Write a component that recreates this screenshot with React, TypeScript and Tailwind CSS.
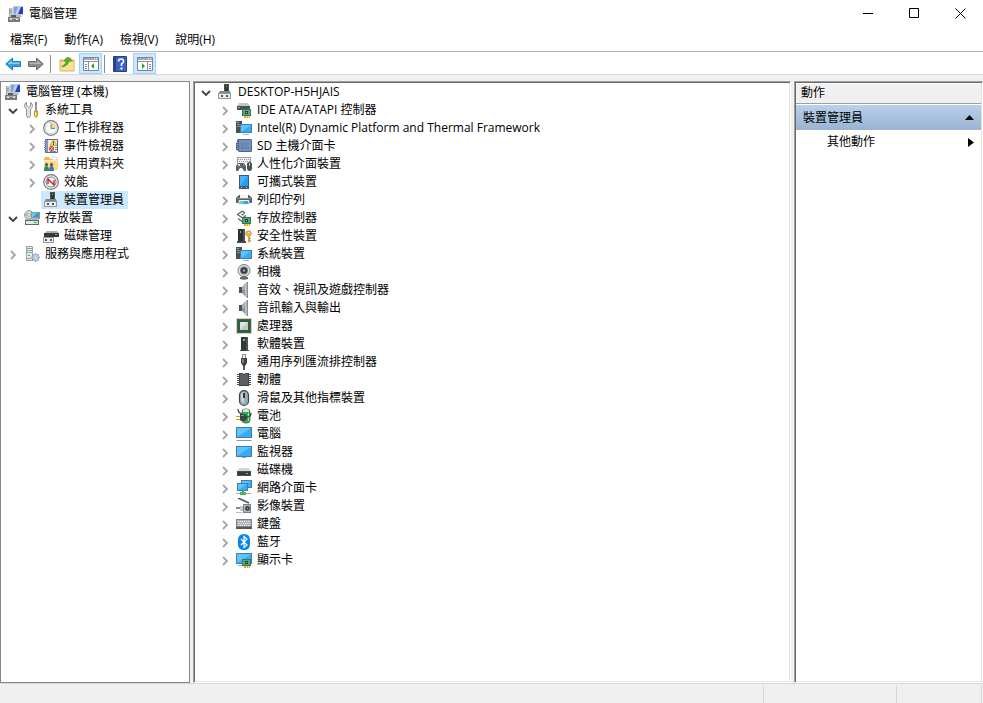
import React, { useState } from 'react';

type IconProps = { children: React.ReactNode };

const Icon: React.FC<IconProps> = ({ children }) => (
  <svg className="block h-4 w-4 shrink-0" viewBox="0 0 16 16" fill="none" aria-hidden="true">
    {children}
  </svg>
);

/* Small drawings reused by several icons */
const Board = () => (
  <>
    <path d="M6 7h9v7H6z" fill="#2f7d55" />
    <path d="M7 8h7v5H7z" fill="#56a37e" />
    <path d="M9 9h3v3H9z" fill="#1a4a33" />
    <path d="M10 10h1v1h-1z" fill="#8fcfae" />
    <path d="M8 14h6v2H8z" fill="#f0a818" />
    <path d="M10 14h1v2h-1zM12 14h1v2h-1z" fill="#fbe08a" />
  </>
);

const Screen = ({ x, y, w, h }: { x: number; y: number; w: number; h: number }) => (
  <>
    <rect x={x} y={y} width={w} height={h} fill="#3f7ea8" />
    <rect x={x + 1} y={y + 1} width={w - 2} height={h - 2} fill="#36acf5" />
    <path d={`M${x + 1} ${y + h - 1}V${y + 1}h${w - 2}z`} fill="#62c3fa" />
  </>
);

const icons: Record<string, React.ReactNode> = {
  management: (
    <Icon>
      <path d="M1 2h4v9H1z" fill="#c9cdd0" />
      <path d="M1 2h1v9H1z" fill="#9da3a8" />
      <path d="M2 4h2v1H2z" fill="#4fc34f" />
      <path d="M2 6h2v1H2z" fill="#8d9499" />
      <path d="M5 0h10v9H5z" fill="#c3cad3" />
      <path d="M6 1h9v7H6z" fill="#2440bd" />
      <path d="M6 1h5L7 8H6z" fill="#7f9fe8" />
      <path d="M10 1h3l-3 7H7z" fill="#b9cdf7" />
      <path d="M8 9h5v1H8zM7 10h7v1H7z" fill="#b6bbc0" />
      <path d="M0 11h12v5H0z" fill="#737a80" />
      <path d="M3 9h5v2H3z" fill="#565d62" />
      <path d="M1 12h10v1H1z" fill="#b4babf" />
      <path d="M2 13h2v1H2zM8 13h2v1H8z" fill="#f4f4f4" />
    </Icon>
  ),
  device: (
    <Icon>
      <path d="M7 0h5v8H7z" fill="#4b5054" />
      <path d="M8 1h3v6H8z" fill="#303437" />
      <path d="M9 2h1v1H9z" fill="#54e052" />
      <path d="M3 7h10l1 3H1z" fill="#7f8487" />
      <path d="M1 9h13v6H1z" fill="#94999c" />
      <path d="M2 10h11v4H2z" fill="#e9ebec" />
      <path d="M4 11h2v2H4zM9 11h2v2H9z" fill="#54595c" />
    </Icon>
  ),
  tools: (
    <Icon>
      <path d="M2.500.500v3l2 1.500 2-1.500v-3q2 1 2 3T6.500 7v6.500q0 2-2 2t-2-2V7Q.5 6 .5 3.500t2-3z" fill="#dfe1e2" stroke="#84898d" strokeWidth=".9" />
      <path d="M12 1v8" stroke="#72777a" strokeWidth="1.500" />
      <path d="M11 0h2v3h-2z" fill="#85898c" />
      <path d="M10.500 9h3v5l-1.500 1.500-1.500-1.500z" fill="#f0bd23" stroke="#ac7910" strokeWidth=".7" />
      <path d="M11 10h1v4h-1z" fill="#ffe587" />
    </Icon>
  ),
  clock: (
    <Icon>
      <circle cx="8" cy="8" r="7.300" fill="#f8f8f6" stroke="#777b7e" strokeWidth="1.200" />
      <circle cx="8" cy="8" r="5.800" stroke="#c8cbcc" strokeWidth=".8" />
      <path d="M8 3a5 5 0 0 1 5 5H8z" fill="#f6d08c" />
      <path d="M8 3.500V8.500h4" stroke="#6b87a2" strokeWidth="1" />
    </Icon>
  ),
  events: (
    <Icon>
      <path d="M2.500 1.500h12v13h-12z" fill="#e5ebf4" stroke="#5b6c90" />
      <path d="M3 2h2v12H3z" fill="#7e96c0" />
      <path d="M1 3.500h2M1 5.500h2M1 7.500h2M1 9.500h2M1 11.500h2" stroke="#8d98a9" />
      <path d="M10.500 1.500l3.500 6H7z" fill="#ffdb19" stroke="#c99a12" strokeWidth=".6" />
      <path d="M10 3.500h1v2h-1zM10 6h1v1h-1z" fill="#3a3420" />
      <circle cx="8.500" cy="10.500" r="2.500" fill="#d4463b" />
      <path d="M7.500 9.500l2 2m0-2l-2 2" stroke="#fff" strokeWidth=".8" />
      <path d="M12 9.500h2M12 11.500h2M7 13.500h6" stroke="#7b90b0" />
    </Icon>
  ),
  shared: (
    <Icon>
      <path d="M1 3l1-2h4l1 2h8v11H1z" fill="#e5bb5a" />
      <path d="M9 1h5v3H9z" fill="#fff" stroke="#b7b7b7" strokeWidth=".5" />
      <path d="M1 4h14v10H1z" fill="#fbdc8c" />
      <path d="M1 4h14v1H1z" fill="#ffeeb9" />
      <circle cx="3.500" cy="8.500" r="1.500" fill="#5d4732" />
      <circle cx="8.500" cy="8.500" r="1.500" fill="#5d4732" />
      <path d="M1 15q0-5 2.500-5T6 15z" fill="#2d8a62" />
      <path d="M6 15q0-5 2.500-5t2.500 5z" fill="#3b77b4" />
    </Icon>
  ),
  performance: (
    <Icon>
      <circle cx="8" cy="8" r="7.300" fill="#f0f1f1" stroke="#777b7e" strokeWidth="1.200" />
      <circle cx="8" cy="8" r="5" fill="#fff" stroke="#797e81" strokeWidth="1" />
      <path d="M5 10V5l6 6V6" stroke="#c5262c" strokeWidth="1.400" />
    </Icon>
  ),
  storage: (
    <Icon>
      <circle cx="5" cy="5" r="4.500" fill="#d2d6d8" stroke="#9aa0a4" />
      <path d="M2 3l3 2-4 1z" fill="#8fbf9a" />
      <circle cx="5" cy="5" r="1.400" fill="#fff" stroke="#858b90" strokeWidth=".6" />
      <path d="M7 2h9v7H7z" fill="#8d979e" />
      <path d="M8 3h7v4H8z" fill="#26a0d6" />
      <path d="M8 3h5L9 7H8z" fill="#73c9ee" />
      <path d="M2 8h12l1 3H1z" fill="#adb3b7" />
      <path d="M1 10h14v5H1z" fill="#60676c" />
      <path d="M2 11h12v3H2z" fill="#e5e7e8" />
      <path d="M10 12h3v1h-3z" fill="#2cc421" />
    </Icon>
  ),
  disk: (
    <Icon>
      <path d="M4 3h10l2 3H1z" fill="#a9adb0" />
      <path d="M1 5h15v4H1z" fill="#35393b" />
      <path d="M12 6h2v1h-2z" fill="#51df3c" />
      <path d="M0 9h11v6H0z" fill="#94999c" />
      <path d="M1 10h9v4H1z" fill="#f0f0f0" />
      <path d="M2 11h2v2H2zM7 11h2v2H7z" fill="#54595c" />
    </Icon>
  ),
  services: (
    <Icon>
      <path d="M2 0h6l1 1v14H2z" fill="#9aa3a9" />
      <path d="M3 1h5v13H3z" fill="#e8ebed" />
      <path d="M3 2.500h5M3 4.500h5M3 6.500h5M3 12.500h4" stroke="#8fa0a8" />
      <path d="M4 9h2v1H4z" fill="#43b645" />
      <path d="M11.500 7v9M7 11.500h9M8.300 8.300l6.400 6.400M14.700 8.300l-6.400 6.400" stroke="#7da3c4" strokeWidth="1.300" />
      <circle cx="11.500" cy="11.500" r="3" fill="#c7dced" stroke="#7da3c4" strokeWidth=".8" />
      <circle cx="11.500" cy="11.500" r="1.200" fill="#fff" stroke="#6592b7" strokeWidth=".5" />
    </Icon>
  ),
  ide: (
    <Icon>
      <path d="M3 1h9l2 3H1z" fill="#c3c7ca" />
      <path d="M1 4h13v4H1z" fill="#4b5054" />
      <path d="M2 5h2v1H2z" fill="#54dd55" />
      <Board />
    </Icon>
  ),
  system: (
    <Icon>
      <path d="M0 1h6v12H0z" fill="#4b5256" />
      <path d="M1 4h4v1H1zM1 6h3v1H1z" fill="#858d91" />
      <path d="M1 2h2v1H1z" fill="#58dc51" />
      <Screen x={4} y={4} w={12} h={9} />
      <path d="M7 14h6v1H7z" fill="#a9bac6" />
    </Icon>
  ),
  sd: (
    <Icon>
      <path d="M2 1h13l1 1v11l-1 1H3l-2-2H0V5l1-1V2z" fill="#4d678b" />
      <path d="M3 2h12v11H3z" fill="#7590b4" />
      <path d="M5 4h8v7H5z" fill="#5f7da5" />
      <path d="M6 4h7v6H6z" fill="#6c89b0" />
      <path d="M1 4.500h1M1 6.500h1M1 8.500h1M1 10.500h1" stroke="#a8bad2" />
    </Icon>
  ),
  hid: (
    <Icon>
      <path d="M1 1h14v6H1z" fill="#9ba1a5" />
      <path d="M2 2h12v5H2z" fill="#eff1f2" />
      <path d="M2 3.500h12M3 5.500h11" stroke="#8b9195" strokeDasharray="1 1" />
      <path d="M2 7h6l2 3v5H8l-2-3H4l-2 3H0v-5z" fill="#5c6368" />
      <path d="M2 8h2v2H2z" fill="#dcdfe1" />
      <path d="M7 8h1v2H7z" fill="#51a5ea" />
      <path d="M4 10h1v1H4z" fill="#ea6a55" />
      <path d="M11 8q0-2 2.500-2T16 8v4q0 3-2.500 3T11 12z" fill="#4c5256" />
      <path d="M13 7h1v3h-1z" fill="#b9bec1" />
    </Icon>
  ),
  portable: (
    <Icon>
      <path d="M3 1h10v14H3z" fill="#44586a" />
      <path d="M4 2h8v10H4z" fill="#20a0f8" />
      <path d="M4 12V2h8z" fill="#46b3fb" />
      <path d="M5 13h1v1H5zM10 13h1v1h-1z" fill="#c5cfd6" />
    </Icon>
  ),
  printer: (
    <Icon>
      <path d="M3 3h10l3 3v5H0V6z" fill="#5a6368" />
      <path d="M1 6h14v1H1z" fill="#8f989d" />
      <path d="M4 3h8v3H4z" fill="#f6f6f6" />
      <path d="M3 8h10l1 5H2z" fill="#f3f5f6" />
      <path d="M4 9h8l1 3H3z" fill="#35a9cf" />
      <path d="M4 9h4l-1 3H3z" fill="#74cdb0" />
    </Icon>
  ),
  controller: (
    <Icon>
      <path d="M6.500 1l-5 3.500L6.500 8l3.500-2.500M9 3.500L6.500 1" stroke="#5c6367" strokeWidth="1.300" />
      <path d="M8 4.500H5.500M2 8.500l4 3" stroke="#5c6367" strokeWidth="1.300" />
      <Board />
    </Icon>
  ),
  security: (
    <Icon>
      <path d="M2 1h7v12H2z" fill="#2b3033" />
      <path d="M7 1h2v12H7z" fill="#4b5155" />
      <path d="M4 3h1v2H4z" fill="#4de04e" />
      <path d="M1 13h9v2H1z" fill="#44494c" />
      <circle cx="12.500" cy="5.500" r="2.800" fill="#e9b550" stroke="#c98f35" strokeWidth=".8" />
      <path d="M12 4h1v1h-1z" fill="#fff" />
      <path d="M12 8h2v6l-1 1-1-1z" fill="#dda23c" />
      <path d="M13 10h2v1h-2zM13 12h2v1h-2z" fill="#c98f35" />
    </Icon>
  ),
  camera: (
    <Icon>
      <circle cx="8" cy="6.500" r="6" fill="#e3e5e6" stroke="#74797c" strokeWidth="1" />
      <circle cx="8" cy="6.500" r="4" fill="#6d7376" />
      <circle cx="8" cy="6.500" r="2.800" fill="#2f3437" />
      <circle cx="8" cy="6.500" r="1.300" fill="#9da6ab" />
      <path d="M6 12h4v1H6zM4 13h8v2q-4 1.500-8 0z" fill="#64696c" />
    </Icon>
  ),
  speaker: (
    <Icon>
      <path d="M3 5h3v6H3z" fill="#4b5358" />
      <path d="M6 5l5-5v16l-5-5z" fill="#8d969b" />
      <path d="M6 5l5-5v8H6z" fill="#a8afb3" />
      <path d="M9 3l2-3h1v16h-1l-2-3z" fill="#b9c0c4" />
      <path d="M11 0h1v16h-1z" fill="#838b90" />
    </Icon>
  ),
  cpu: (
    <Icon>
      <rect x=".5" y=".5" width="15" height="15" stroke="#b9a758" strokeDasharray="1 1" />
      <path d="M1 1h14v14H1z" fill="#35694c" />
      <path d="M2 2h12v12H2z" fill="#2a5f42" />
      <path d="M4 4h8v8H4z" fill="#c3c7c8" />
      <path d="M4 12V4h8z" fill="#dfe2e2" />
    </Icon>
  ),
  software: (
    <Icon>
      <path d="M5 1h7v13H5z" fill="#303639" />
      <path d="M10 1h2v13h-2z" fill="#4d5357" />
      <path d="M7 3h2v2H7z" fill="#4de24d" />
      <path d="M4 14h9v1H4z" fill="#42484b" />
    </Icon>
  ),
  usb: (
    <Icon>
      <path d="M6 0h4v4H6z" fill="#8c9296" />
      <path d="M7 1h2v3H7z" fill="#eceeef" />
      <path d="M5 4h6v5l-2 3H7L5 9z" fill="#3c4245" />
      <path d="M6 5h2v4H6z" fill="#7b8286" />
      <path d="M7 12h2v4H7z" fill="#5a5f62" />
    </Icon>
  ),
  firmware: (
    <Icon>
      <path
        d="M1 2h3v1H1zM1 4h3v1H1zM1 6h3v1H1zM1 8h3v1H1zM1 10h3v1H1zM1 12h3v1H1zM12 2h3v1h-3zM12 4h3v1h-3zM12 6h3v1h-3zM12 8h3v1h-3zM12 10h3v1h-3zM12 12h3v1h-3z"
        fill="#4b5053"
      />
      <path d="M3 1h3l2 1 2-1h3v13H3z" fill="#3e4346" />
      <path d="M4 2h2l2 1 2-1h2v11H4z" fill="#5a6064" />
    </Icon>
  ),
  mouse: (
    <Icon>
      <rect x="3.500" y=".6" width="9" height="14.800" rx="4.500" fill="#9fabb4" stroke="#3f464b" strokeWidth="1.200" />
      <path d="M5 6q0-4 3-4v11q-3-1-3-4z" fill="#c9d2d8" />
      <path d="M7 3h2v5H7z" fill="#30393e" />
    </Icon>
  ),
  battery: (
    <Icon>
      <rect x="6" y="1" width="8" height="14" rx="3" fill="#25b344" stroke="#52605a" strokeWidth=".8" />
      <path d="M7 2q3-2 6 0v2H7z" fill="#d9e2dc" />
      <path d="M12 5h1v8h-1z" fill="#8df09c" />
      <path d="M2 1q0 4 4 5" stroke="#3b4144" strokeWidth="1.200" />
      <path d="M4 6h4q3 1 3 3.500T8 13H5L4 12z" fill="#3d4245" />
      <path d="M11 9q4 0 4-4" stroke="#3d4245" strokeWidth="1.300" />
      <path d="M0 8h4v1H0zM0 11h4v1H0z" fill="#d79d19" />
      <path d="M5 7h3v1H5z" fill="#858b8e" />
    </Icon>
  ),
  computer: (
    <Icon>
      <Screen x={0} y={1} w={16} h={11} />
      <path d="M1 14h14l1 1H0z" fill="#7f9bb0" />
    </Icon>
  ),
  monitor: (
    <Icon>
      <Screen x={0} y={2} w={16} h={11} />
      <path d="M6 13h4v1H6z" fill="#91a6b5" />
    </Icon>
  ),
  drive: (
    <Icon>
      <path d="M3 6h10l2 3H1z" fill="#d3d6d8" />
      <path d="M1 9h14v5H1z" fill="#4a4f52" />
      <path d="M2 10h12v3H2z" fill="#34393c" />
      <path d="M10 11h2v1h-2z" fill="#50df4d" />
    </Icon>
  ),
  network: (
    <Icon>
      <Screen x={5} y={0} w={11} h={8} />
      <Screen x={1} y={3} w={11} h={8} />
      <path d="M6 11h2v2H6zM4 12h6v3H4z" fill="#48b64f" />
      <path d="M0 13h4v1H0zM10 13h5v1h-5z" fill="#a4acaf" />
    </Icon>
  ),
  imaging: (
    <Icon>
      <path d="M2 0l11 5" stroke="#4d5356" strokeWidth="1.500" />
      <path d="M0 9h7v2H0z" fill="#84898d" />
      <path d="M4 8h4v5H4z" fill="#c4c8ca" />
      <path d="M7 6h8v9H7z" fill="#7b8084" />
      <path d="M8 7h6v7H8z" fill="#b4b9bc" />
      <circle cx="11.500" cy="10.500" r="2.400" fill="#33383b" />
      <circle cx="11.500" cy="10.500" r=".9" fill="#829ba9" />
      <path d="M0 14.500h6" stroke="#bcc0c3" />
    </Icon>
  ),
  keyboard: (
    <Icon>
      <path d="M0 3h16v10H0z" fill="#7c8489" />
      <path d="M1 4h14v6H1z" fill="#aab2b8" />
      <path d="M2 5.500h12M3 7.500h11M2 9.500h12" stroke="#f8f8f8" strokeDasharray="1 1" />
      <path d="M0 11h16v2H0z" fill="#51595e" />
    </Icon>
  ),
  bluetooth: (
    <Icon>
      <rect x="2" y="0" width="12" height="16" rx="5.500" fill="#0a84f5" />
      <path d="M5 5l6 6-3 2.500v-11L11 5l-6 6" stroke="#fff" strokeWidth="1.200" />
    </Icon>
  ),
  display: (
    <Icon>
      <Screen x={0} y={1} w={16} h={11} />
      <path d="M2 13h4v1H2z" fill="#9fb2bf" />
      <Board />
    </Icon>
  ),
};

type TreeNode = {
  label: string;
  icon: string;
  level: number;
  state?: 'open' | 'closed';
};

const consoleTree: TreeNode[] = [
  { label: '電腦管理 (本機)', icon: 'management', level: 0 },
  { label: '系統工具', icon: 'tools', level: 1, state: 'open' },
  { label: '工作排程器', icon: 'clock', level: 2, state: 'closed' },
  { label: '事件檢視器', icon: 'events', level: 2, state: 'closed' },
  { label: '共用資料夾', icon: 'shared', level: 2, state: 'closed' },
  { label: '效能', icon: 'performance', level: 2, state: 'closed' },
  { label: '裝置管理員', icon: 'device', level: 2 },
  { label: '存放裝置', icon: 'storage', level: 1, state: 'open' },
  { label: '磁碟管理', icon: 'disk', level: 2 },
  { label: '服務與應用程式', icon: 'services', level: 1, state: 'closed' },
];

const deviceTree: TreeNode[] = [
  { label: 'DESKTOP-H5HJAIS', icon: 'device', level: 1, state: 'open' },
  { label: 'IDE ATA/ATAPI 控制器', icon: 'ide', level: 2, state: 'closed' },
  { label: 'Intel(R) Dynamic Platform and Thermal Framework', icon: 'system', level: 2, state: 'closed' },
  { label: 'SD 主機介面卡', icon: 'sd', level: 2, state: 'closed' },
  { label: '人性化介面裝置', icon: 'hid', level: 2, state: 'closed' },
  { label: '可攜式裝置', icon: 'portable', level: 2, state: 'closed' },
  { label: '列印佇列', icon: 'printer', level: 2, state: 'closed' },
  { label: '存放控制器', icon: 'controller', level: 2, state: 'closed' },
  { label: '安全性裝置', icon: 'security', level: 2, state: 'closed' },
  { label: '系統裝置', icon: 'system', level: 2, state: 'closed' },
  { label: '相機', icon: 'camera', level: 2, state: 'closed' },
  { label: '音效、視訊及遊戲控制器', icon: 'speaker', level: 2, state: 'closed' },
  { label: '音訊輸入與輸出', icon: 'speaker', level: 2, state: 'closed' },
  { label: '處理器', icon: 'cpu', level: 2, state: 'closed' },
  { label: '軟體裝置', icon: 'software', level: 2, state: 'closed' },
  { label: '通用序列匯流排控制器', icon: 'usb', level: 2, state: 'closed' },
  { label: '韌體', icon: 'firmware', level: 2, state: 'closed' },
  { label: '滑鼠及其他指標裝置', icon: 'mouse', level: 2, state: 'closed' },
  { label: '電池', icon: 'battery', level: 2, state: 'closed' },
  { label: '電腦', icon: 'computer', level: 2, state: 'closed' },
  { label: '監視器', icon: 'monitor', level: 2, state: 'closed' },
  { label: '磁碟機', icon: 'drive', level: 2, state: 'closed' },
  { label: '網路介面卡', icon: 'network', level: 2, state: 'closed' },
  { label: '影像裝置', icon: 'imaging', level: 2, state: 'closed' },
  { label: '鍵盤', icon: 'keyboard', level: 2, state: 'closed' },
  { label: '藍牙', icon: 'bluetooth', level: 2, state: 'closed' },
  { label: '顯示卡', icon: 'display', level: 2, state: 'closed' },
];

const indents = ['pl-px', 'pl-px', 'pl-5'];

const Tree: React.FC<{ nodes: TreeNode[]; initial?: string }> = ({ nodes, initial }) => {
  const [selected, setSelected] = useState(initial);

  return (
    <ul>
      {nodes.map((node) => (
        <li key={node.label} className={`flex h-[18px] items-center ${indents[node.level]}`}>
          {node.level > 0 && (
            <span className="flex w-[19px] shrink-0 justify-center pt-px">
              {node.state && (
                <button type="button" aria-label={node.label} aria-expanded={node.state === 'open'}>
                  <svg className="block h-[10px] w-[10px]" viewBox="0 0 10 10" fill="none">
                    {node.state === 'open' ? (
                      <path d="M1 3l4 4 4-4" stroke="#404040" strokeWidth="1.800" />
                    ) : (
                      <path d="M3 1l4 4-4 4" stroke="#a6a6a6" strokeWidth="1.800" />
                    )}
                  </svg>
                </button>
              )}
            </span>
          )}
          <button
            type="button"
            onClick={() => setSelected(node.label)}
            className={`flex h-[18px] items-center gap-[5px] pl-[2px] pr-1 whitespace-nowrap ${
              selected === node.label ? 'bg-[#cce8ff]' : ''
            }`}
          >
            {icons[node.icon]}
            <span>{node.label}</span>
          </button>
        </li>
      ))}
    </ul>
  );
};

const PaneIcon = ({ side }: { side: 'left' | 'right' }) => (
  <svg className="block h-4 w-4" viewBox="0 0 16 16" fill="none">
    <path d="M.5 1.500h15v13H.5z" fill="#fff" stroke="#7c848c" />
    <path d="M1 2h14v2H1z" fill="#a3aab2" />
    <path d="M11 2h1v1h-1zM13 2h1v1h-1z" fill="#fff" />
    <path d="M1 5.500h14" stroke="#8b939c" />
    {side === 'left' ? (
      <>
        <path d="M5.500 6v8" stroke="#8b939c" />
        <path d="M2 8.500h2M2 10.500h2M2 12.500h2" stroke="#6c88b0" />
        <path d="M11 7v6l-3-3z" fill="#2da52d" />
      </>
    ) : (
      <>
        <path d="M10.500 6v8" stroke="#8b939c" />
        <path d="M12 8.500h2M12 10.500h2M12 12.500h2" stroke="#6c88b0" />
        <path d="M5 7v6l3-3z" fill="#2da52d" />
      </>
    )}
  </svg>
);

const menus = ['檔案(F)', '動作(A)', '檢視(V)', '說明(H)'];

const Toolbar = () => (
  <div className="flex h-6 shrink-0 items-center border-y border-t-[#b4b4bc] border-b-[#d9d9d9] bg-white pt-px pl-[5px]">
    <button type="button" aria-label="上一頁">
      <svg className="block h-4 w-4" viewBox="0 0 16 16">
        <path d="M.7 8l6.800-6v3.500h8v5h-8V14z" fill="#2fa4e4" stroke="#2a7cb4" />
        <path d="M2.500 8l4-3.500v2h8V8z" fill="#7fd0f6" />
      </svg>
    </button>
    <button type="button" aria-label="下一頁" className="ml-[7px]">
      <svg className="block h-4 w-4" viewBox="0 0 16 16">
        <path d="M15.300 8L8.500 2v3.500h-8v5h8V14z" fill="#8b8b8b" stroke="#6c6c6c" />
        <path d="M13.500 8l-4-3.500v2h-8V8z" fill="#b4b4b4" />
      </svg>
    </button>
    <span className="ml-[6px] h-[18px] w-px bg-[#8c8c8c]" />
    <button type="button" aria-label="上移一層" className="ml-2">
      <svg className="block h-4 w-4" viewBox="0 0 16 16">
        <path d="M1 4h5l1-2h5v2h3v11H1z" fill="#e9c263" stroke="#cfa14b" strokeWidth=".8" />
        <path d="M1.500 6h13v8.500h-13z" fill="#fbe09a" />
        <path d="M3 10q4-1 4-5H5l4-4 4 4h-3q-1 5-7 6z" fill="#44b82c" stroke="#2c8a1c" strokeWidth=".5" />
      </svg>
    </button>
    <button
      type="button"
      aria-label="顯示/隱藏主控台樹狀目錄"
      className="ml-1 flex h-[21px] w-[23px] items-center justify-center border border-[#99d1ff] bg-[#cce8ff]"
    >
      <PaneIcon side="left" />
    </button>
    <span className="ml-[2px] h-[18px] w-px bg-[#8c8c8c]" />
    <button type="button" aria-label="說明" className="ml-2">
      <svg className="block h-4 w-[14px]" viewBox="0 0 14 16" fill="none">
        <path d="M.5.500h13v15H.5z" fill="#3c5fc4" stroke="#263f91" />
        <path d="M1 1h2v14H1z" fill="#263f91" />
        <path d="M5.500 5.500q0-2.500 2.500-2.500t2.500 2.200Q10.500 7 8.500 8v2" stroke="#fff" strokeWidth="1.600" />
        <path d="M7.500 11.500h2v2h-2z" fill="#fff" />
      </svg>
    </button>
    <button
      type="button"
      aria-label="顯示/隱藏動作窗格"
      className="ml-[6px] flex h-[21px] w-[23px] items-center justify-center border border-[#99d1ff] bg-[#cce8ff]"
    >
      <PaneIcon side="right" />
    </button>
  </div>
);

const App: React.FC = () => {
  return (
    <div className="flex min-h-screen flex-col bg-[#f0f0f0] font-['Open_Sans','Noto_Sans_CJK_TC',sans-serif] text-[12px] leading-[18px] text-black">
      {/* Title bar */}
      <header className="flex h-[27px] shrink-0 items-center bg-white pl-2">
        {icons.management}
        <h1 className="ml-[5px] flex-1">電腦管理</h1>
        <button type="button" aria-label="最小化" className="flex h-full w-[46px] items-center justify-center">
          <svg className="h-[11px] w-[11px]" viewBox="0 0 11 11" stroke="#000">
            <path d="M0 5.500h10" />
          </svg>
        </button>
        <button type="button" aria-label="最大化" className="flex h-full w-[46px] items-center justify-center">
          <svg className="h-[11px] w-[11px]" viewBox="0 0 11 11" fill="none" stroke="#000">
            <path d="M.5.500h9v9h-9z" />
          </svg>
        </button>
        <button type="button" aria-label="關閉" className="flex h-full w-[46px] items-center justify-center">
          <svg className="h-[11px] w-[11px]" viewBox="0 0 11 11" stroke="#000">
            <path d="M.5.500l10 10M10.500.500l-10 10" />
          </svg>
        </button>
      </header>

      {/* Menu bar */}
      <nav className="flex h-6 shrink-0 items-center gap-px bg-white pt-[2px] pl-[2px]">
        {menus.map((menu) => (
          <button key={menu} type="button" className="px-2">
            {menu}
          </button>
        ))}
      </nav>

      <Toolbar />

      <main className="flex flex-1 pt-[6px]">
        {/* Console tree */}
        <section className="w-[190px] shrink-0 border border-[#828790] bg-white pt-px pl-px">
          <Tree nodes={consoleTree} initial="裝置管理員" />
        </section>

        {/* Device list */}
        <section className="ml-[3px] min-w-0 flex-1 border border-t-[#a0a0a0] border-r-white border-b-white border-l-[#a0a0a0] bg-white p-px shadow-[inset_1px_1px_0_#696969,inset_-1px_-1px_0_#e3e3e3]">
          <Tree nodes={deviceTree} />
        </section>

        {/* Actions pane */}
        <section className="ml-[3px] w-[189px] shrink-0 border border-t-[#a0a0a0] border-r-white border-b-white border-l-[#a0a0a0] bg-white p-px shadow-[inset_1px_1px_0_#696969,inset_-1px_-1px_0_#e3e3e3]">
          <h2 className="mt-px h-5 border-b border-[#a0a0a0] bg-[#f0f0f0] pl-[5px]">動作</h2>
          <button
            type="button"
            className="mt-px flex h-[25px] w-full items-center justify-between bg-linear-to-b from-[#b9d1ea] to-[#99b4d1] pr-[7px] pl-[7px]"
          >
            <span>裝置管理員</span>
            <svg className="h-[5px] w-[9px]" viewBox="0 0 9 5">
              <path d="M0 5l4.500-5L9 5z" fill="#000" />
            </svg>
          </button>
          <button type="button" className="flex h-6 w-full items-center justify-between pr-[7px] pl-[31px]">
            <span>其他動作</span>
            <svg className="h-[9px] w-[6px]" viewBox="0 0 6 9">
              <path d="M0 0l6 4.500L0 9z" fill="#000" />
            </svg>
          </button>
        </section>
      </main>

      {/* Status bar */}
      <footer className="flex h-5 shrink-0 border-t border-[#d7d7d7] pt-px">
        <span className="flex-1 border-r border-[#d7d7d7]" />
        <span className="w-[133px] border-r border-[#d7d7d7]" />
        <span className="mr-px w-[85px] border-r border-[#d7d7d7]" />
      </footer>
    </div>
  );
};

export default App;
